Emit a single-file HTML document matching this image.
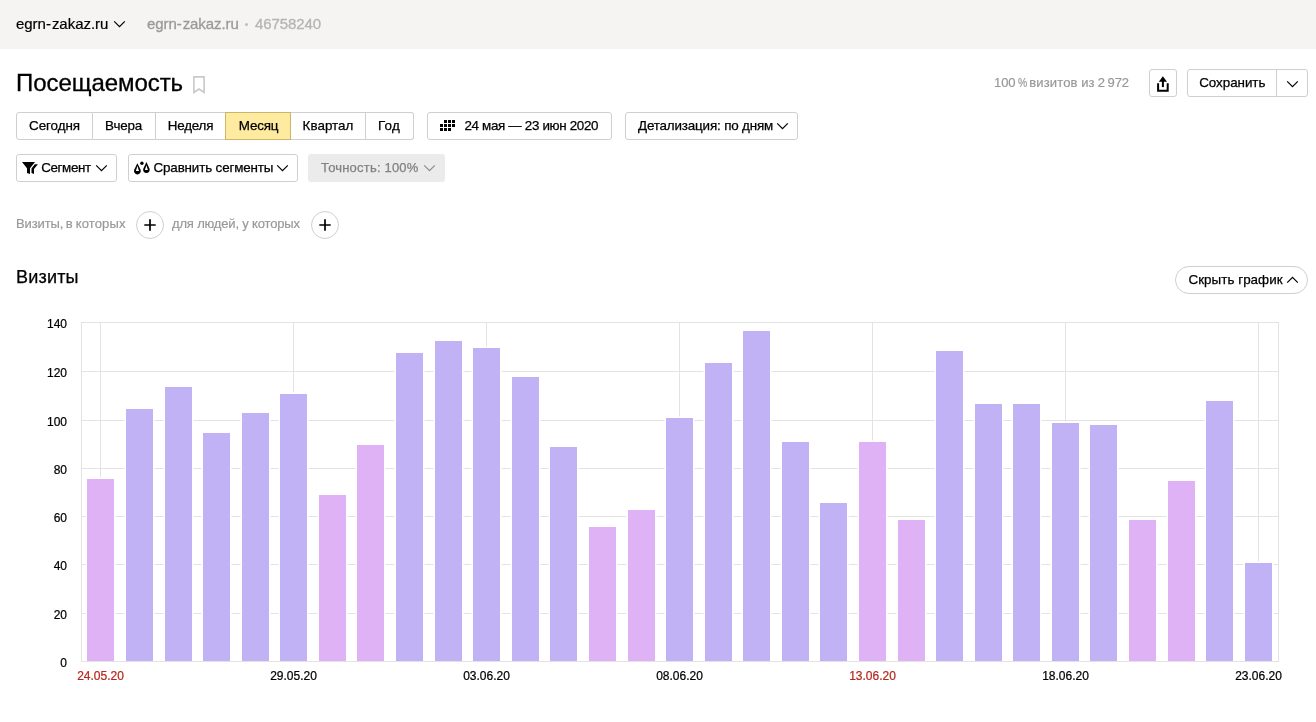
<!DOCTYPE html>
<html lang="ru"><head><meta charset="utf-8"><title>Посещаемость</title>
<style>
*{box-sizing:border-box;margin:0;padding:0}
html,body{width:1316px;height:722px;overflow:hidden;background:#fff}
body{will-change:transform;font-family:"Liberation Sans",sans-serif;color:#000;position:relative;font-size:13px}
.abs{position:absolute;white-space:nowrap}
#hdr{position:absolute;left:0;top:0;width:1316px;height:49px;background:#f5f4f2}
.btn,.seg{-webkit-text-stroke:0.25px #000;letter-spacing:-0.21px}
.btn{position:absolute;height:28px;border:1px solid #cfcfcf;border-radius:3px;background:#fff;font-size:13.4px;line-height:26px;white-space:nowrap}
.seg{position:absolute;top:112px;height:28px;border:1px solid #cfcfcf;border-left:none;background:#fff;font-size:13.4px;line-height:26px;text-align:center;white-space:nowrap}
.chev{position:absolute}
.yl,.xl{-webkit-text-stroke:0.22px currentColor}
.yl{position:absolute;left:20px;width:47px;text-align:right;font-size:12px;line-height:14px;color:#000}
.xl{position:absolute;top:669px;width:60px;text-align:center;font-size:12px;line-height:14px;color:#000}
.xl.red{color:#b8271d}
.gray{color:#999;-webkit-text-stroke:0.2px #999}
</style></head><body>
<div id="hdr"></div>
<div class="abs" style="left:16px;top:14px;font-size:15px;line-height:20px;letter-spacing:-0.03px;-webkit-text-stroke:0.2px #000">egrn-<span style="margin-left:1px">zakaz.ru</span></div>
<svg class="chev c1" width="13" height="8" viewBox="0 0 13 8"><path d="M1.2 1.3 L6.5 6.6 L11.8 1.3" fill="none" stroke="currentColor" stroke-width="1.2"/></svg>
<div class="abs gray" style="left:147px;top:14px;font-size:15px;line-height:20px;letter-spacing:-0.08px;-webkit-text-stroke:0.3px #999">egrn-<span style="margin-left:1px">zakaz.ru</span></div>
<div class="abs" style="left:245.4px;top:23px;width:3px;height:3px;border-radius:2px;background:#bdbdbd"></div>
<div class="abs" style="left:255px;top:14px;font-size:15px;line-height:20px;color:#b4b4b4;-webkit-text-stroke:0.3px #b4b4b4;letter-spacing:-0.1px">46758240</div>

<div class="abs" id="title" style="left:16px;top:68px;font-size:24px;line-height:30px;letter-spacing:-0.06px;-webkit-text-stroke:0.3px #000">Посещаемость</div>
<svg class="abs" style="left:190px;top:73px" width="18" height="24" viewBox="190 73 18 24"><path d="M193.9 76.9 H204.1 V92.4 L199 89 L193.9 92.4 Z" fill="none" stroke="#c9c9c9" stroke-width="1.6"/></svg>

<div class="abs gray" style="left:994px;top:74px;font-size:13px;line-height:18px;letter-spacing:-0.1px">100</div>
<div class="abs gray" style="left:1018px;top:74px;font-size:13px;line-height:18px;transform:scaleX(0.8);transform-origin:0 0">%</div>
<div class="abs gray" style="left:1029.2px;top:74px;font-size:13px;line-height:18px;letter-spacing:0.15px">визитов</div>
<div class="abs gray" style="left:1081.3px;top:74px;font-size:13px;line-height:18px">из</div>
<div class="abs gray" style="left:1097.7px;top:74px;font-size:13px;line-height:18px">2</div>
<div class="abs gray" style="left:1107.5px;top:74px;font-size:13px;line-height:18px;letter-spacing:-0.1px">972</div>
<div class="btn" style="left:1149px;top:69px;width:28px"></div>
<svg class="abs" style="left:1149px;top:69px" width="28" height="28" viewBox="1149 69 28 28"><path d="M1162.9 76.2 L1167 81.8 H1158.8 Z" fill="#000"/><rect x="1161.9" y="80.5" width="2" height="6.6" fill="#000"/><path d="M1158.1 83.3 V90.7 H1167.7 V83.3" fill="none" stroke="#000" stroke-width="2"/></svg>
<div class="btn" style="left:1187px;top:69px;width:121px;padding-left:11.2px;letter-spacing:-0.04px">Сохранить</div>
<div class="abs" style="left:1276px;top:70px;width:1px;height:26px;background:#cfcfcf"></div>
<svg class="chev c2" width="13" height="8" viewBox="0 0 13 8"><path d="M1.2 1.3 L6.5 6.6 L11.8 1.3" fill="none" stroke="currentColor" stroke-width="1.2"/></svg>

<div class="seg" style="left:16px;width:77px;letter-spacing:-0.06px;border-left:1px solid #cfcfcf;border-radius:3px 0 0 3px">Сегодня</div>
<div class="seg" style="left:93px;width:63px;padding-right:1px">Вчера</div>
<div class="seg" style="left:156px;width:70px">Неделя</div>
<div class="seg" style="left:225px;width:66px;background:#ffeba0;border:1px solid #ccb66a;z-index:1;padding-left:1px">Месяц</div>
<div class="seg" style="left:291px;width:75px;letter-spacing:0.04px">Квартал</div>
<div class="seg" style="left:366px;width:48px;letter-spacing:0.19px;padding-right:1px;border-radius:0 3px 3px 0">Год</div>

<div class="btn" style="left:427px;top:112px;width:185px;padding-left:36.4px;letter-spacing:-0.33px">24 мая — 23 июн 2020</div>
<svg class="abs" style="left:440px;top:120px" width="15" height="11" viewBox="0 0 15 11" shape-rendering="crispEdges"><g fill="#000"><rect x="4" y="0" width="3" height="3"/><rect x="8" y="0" width="3" height="3"/><rect x="12" y="0" width="3" height="3"/><rect x="0" y="4" width="3" height="3"/><rect x="4" y="4" width="3" height="3"/><rect x="8" y="4" width="3" height="3"/><rect x="12" y="4" width="3" height="3"/><rect x="0" y="8" width="3" height="3"/><rect x="4" y="8" width="3" height="3"/><rect x="8" y="8" width="3" height="3"/></g></svg>

<div class="btn" style="left:625px;top:112px;width:173px;padding-left:12px;letter-spacing:-0.16px">Детализация: по дням</div>
<svg class="chev c3" width="13" height="8" viewBox="0 0 13 8"><path d="M1.2 1.3 L6.5 6.6 L11.8 1.3" fill="none" stroke="currentColor" stroke-width="1.2"/></svg>

<div class="btn" style="left:16px;top:154px;width:101px;padding-left:24.2px;letter-spacing:-0.36px">Сегмент</div>
<svg class="abs" style="left:20px;top:160px" width="20" height="16" viewBox="20 160 20 16"><path d="M22 162 H35 L30 168.3 V173.9 L27 172.9 V168.3 Z" fill="#000"/><path d="M34.8 164.2 H37.9 L34 168.9 V173.9 L31.5 173.1 V168.4 Z" fill="#000"/></svg>
<svg class="chev c4" width="13" height="8" viewBox="0 0 13 8"><path d="M1.2 1.3 L6.5 6.6 L11.8 1.3" fill="none" stroke="currentColor" stroke-width="1.2"/></svg>

<div class="btn" style="left:128px;top:154px;width:170px;padding-left:24.5px;letter-spacing:-0.14px">Сравнить сегменты</div>
<svg class="abs" style="left:132px;top:160px" width="20" height="16" viewBox="132 160 20 16"><path d="M137.4 163.3 L140.5 169.6 A3.4 3.4 0 1 1 134.3 169.6 Z" fill="#000"/><path d="M137.4 165.8 L139 171.1 H135.9 Z" fill="#fff"/><path d="M146.4 162.1 L149.4 168.4 A3.3 3.3 0 1 1 143.4 168.4 Z" fill="#000"/><path d="M146.4 165.2 L147.9 169.9 H144.9 Z" fill="#fff"/><circle cx="141.9" cy="163.3" r="1.7" fill="#000"/></svg>
<svg class="chev c5" width="13" height="8" viewBox="0 0 13 8"><path d="M1.2 1.3 L6.5 6.6 L11.8 1.3" fill="none" stroke="currentColor" stroke-width="1.2"/></svg>

<div class="abs" style="left:308px;top:154px;width:137px;height:28px;border-radius:3px;background:#ebebeb;font-size:13px;line-height:28px;padding-left:13px;color:#828282;-webkit-text-stroke:0.25px #828282;letter-spacing:0.2px">Точность: 100%</div>
<svg class="chev c6" width="13" height="8" viewBox="0 0 13 8"><path d="M1.2 1.3 L6.5 6.6 L11.8 1.3" fill="none" stroke="currentColor" stroke-width="1.2"/></svg>

<div class="abs gray" style="left:16px;top:215px;font-size:13px;line-height:18px;letter-spacing:-0.1px">Визиты,</div><div class="abs gray" style="left:65.8px;top:215px;font-size:13px;line-height:18px">в</div><div class="abs gray" style="left:75.8px;top:215px;font-size:13px;line-height:18px;letter-spacing:0.12px">которых</div>
<div class="abs circ" style="left:136px;top:211px"><svg style="position:absolute;left:-1px;top:-1px" width="28" height="28" viewBox="0 0 28 28"><path d="M8.3 14 H19.7 M14 8.3 V19.7" stroke="#000" stroke-width="1.7" fill="none"/></svg></div>
<div class="abs gray" style="left:172px;top:215px;font-size:13px;line-height:18px;letter-spacing:-0.17px">для людей, у которых</div>
<div class="abs circ" style="left:311px;top:211px"><svg style="position:absolute;left:-1px;top:-1px" width="28" height="28" viewBox="0 0 28 28"><path d="M8.3 14 H19.7 M14 8.3 V19.7" stroke="#000" stroke-width="1.7" fill="none"/></svg></div>

<div class="abs" style="left:16px;top:266px;font-size:18px;line-height:22px;letter-spacing:0.2px;-webkit-text-stroke:0.25px #000">Визиты</div>

<div class="btn" style="left:1175px;top:266px;width:133px;border-radius:14px;padding-left:12.5px;letter-spacing:0.04px">Скрыть график</div>
<svg class="chev c7" width="13" height="8" viewBox="0 0 13 8"><path d="M1.2 6.7 L6.5 1.4 L11.8 6.7" fill="none" stroke="currentColor" stroke-width="1.2"/></svg>

<svg id="chart" width="1316" height="722" viewBox="0 0 1316 722" style="position:absolute;left:0;top:0" shape-rendering="crispEdges"><rect x="81" y="322" width="1198" height="1" fill="#e3e3e3"/><rect x="81" y="371" width="1198" height="1" fill="#e3e3e3"/><rect x="81" y="420" width="1198" height="1" fill="#e3e3e3"/><rect x="81" y="468" width="1198" height="1" fill="#e3e3e3"/><rect x="81" y="516" width="1198" height="1" fill="#e3e3e3"/><rect x="81" y="564" width="1198" height="1" fill="#e3e3e3"/><rect x="81" y="613" width="1198" height="1" fill="#e3e3e3"/><rect x="81" y="661" width="1198" height="1" fill="#e3e3e3"/><rect x="100" y="322" width="1" height="339" fill="#e3e3e3"/><rect x="293" y="322" width="1" height="339" fill="#e3e3e3"/><rect x="486" y="322" width="1" height="339" fill="#e3e3e3"/><rect x="679" y="322" width="1" height="339" fill="#e3e3e3"/><rect x="872" y="322" width="1" height="339" fill="#e3e3e3"/><rect x="1065" y="322" width="1" height="339" fill="#e3e3e3"/><rect x="1258" y="322" width="1" height="339" fill="#e3e3e3"/><rect x="81" y="322" width="1" height="340" fill="#e3e3e3"/><rect x="1278" y="322" width="1" height="340" fill="#e3e3e3"/><g shape-rendering="auto"><rect x="85.50" y="477.5" width="30" height="183.5" fill="#fff"/><rect x="87.00" y="479" width="27" height="182" fill="#dfb2f5"/><rect x="124.50" y="407.5" width="30" height="253.5" fill="#fff"/><rect x="126.00" y="409" width="27" height="252" fill="#c0b2f5"/><rect x="163.50" y="385.5" width="30" height="275.5" fill="#fff"/><rect x="165.00" y="387" width="27" height="274" fill="#c0b2f5"/><rect x="201.50" y="431.5" width="30" height="229.5" fill="#fff"/><rect x="203.00" y="433" width="27" height="228" fill="#c0b2f5"/><rect x="240.50" y="411.5" width="30" height="249.5" fill="#fff"/><rect x="242.00" y="413" width="27" height="248" fill="#c0b2f5"/><rect x="278.50" y="392.5" width="30" height="268.5" fill="#fff"/><rect x="280.00" y="394" width="27" height="267" fill="#c0b2f5"/><rect x="317.50" y="493.5" width="30" height="167.5" fill="#fff"/><rect x="319.00" y="495" width="27" height="166" fill="#dfb2f5"/><rect x="355.50" y="443.5" width="30" height="217.5" fill="#fff"/><rect x="357.00" y="445" width="27" height="216" fill="#dfb2f5"/><rect x="394.50" y="351.5" width="30" height="309.5" fill="#fff"/><rect x="396.00" y="353" width="27" height="308" fill="#c0b2f5"/><rect x="433.50" y="339.5" width="30" height="321.5" fill="#fff"/><rect x="435.00" y="341" width="27" height="320" fill="#c0b2f5"/><rect x="471.50" y="346.5" width="30" height="314.5" fill="#fff"/><rect x="473.00" y="348" width="27" height="313" fill="#c0b2f5"/><rect x="510.50" y="375.5" width="30" height="285.5" fill="#fff"/><rect x="512.00" y="377" width="27" height="284" fill="#c0b2f5"/><rect x="548.50" y="445.5" width="30" height="215.5" fill="#fff"/><rect x="550.00" y="447" width="27" height="214" fill="#c0b2f5"/><rect x="587.50" y="525.5" width="30" height="135.5" fill="#fff"/><rect x="589.00" y="527" width="27" height="134" fill="#dfb2f5"/><rect x="626.50" y="508.5" width="30" height="152.5" fill="#fff"/><rect x="628.00" y="510" width="27" height="151" fill="#dfb2f5"/><rect x="664.50" y="416.5" width="30" height="244.5" fill="#fff"/><rect x="666.00" y="418" width="27" height="243" fill="#c0b2f5"/><rect x="703.50" y="361.5" width="30" height="299.5" fill="#fff"/><rect x="705.00" y="363" width="27" height="298" fill="#c0b2f5"/><rect x="741.50" y="329.5" width="30" height="331.5" fill="#fff"/><rect x="743.00" y="331" width="27" height="330" fill="#c0b2f5"/><rect x="780.50" y="440.5" width="30" height="220.5" fill="#fff"/><rect x="782.00" y="442" width="27" height="219" fill="#c0b2f5"/><rect x="818.50" y="501.5" width="30" height="159.5" fill="#fff"/><rect x="820.00" y="503" width="27" height="158" fill="#c0b2f5"/><rect x="857.50" y="440.5" width="30" height="220.5" fill="#fff"/><rect x="859.00" y="442" width="27" height="219" fill="#dfb2f5"/><rect x="896.50" y="518.5" width="30" height="142.5" fill="#fff"/><rect x="898.00" y="520" width="27" height="141" fill="#dfb2f5"/><rect x="934.50" y="349.5" width="30" height="311.5" fill="#fff"/><rect x="936.00" y="351" width="27" height="310" fill="#c0b2f5"/><rect x="973.50" y="402.5" width="30" height="258.5" fill="#fff"/><rect x="975.00" y="404" width="27" height="257" fill="#c0b2f5"/><rect x="1011.50" y="402.5" width="30" height="258.5" fill="#fff"/><rect x="1013.00" y="404" width="27" height="257" fill="#c0b2f5"/><rect x="1050.50" y="421.5" width="30" height="239.5" fill="#fff"/><rect x="1052.00" y="423" width="27" height="238" fill="#c0b2f5"/><rect x="1088.50" y="423.5" width="30" height="237.5" fill="#fff"/><rect x="1090.00" y="425" width="27" height="236" fill="#c0b2f5"/><rect x="1127.50" y="518.5" width="30" height="142.5" fill="#fff"/><rect x="1129.00" y="520" width="27" height="141" fill="#dfb2f5"/><rect x="1166.50" y="479.5" width="30" height="181.5" fill="#fff"/><rect x="1168.00" y="481" width="27" height="180" fill="#dfb2f5"/><rect x="1204.50" y="399.5" width="30" height="261.5" fill="#fff"/><rect x="1206.00" y="401" width="27" height="260" fill="#c0b2f5"/><rect x="1243.50" y="561.5" width="30" height="99.5" fill="#fff"/><rect x="1245.00" y="563" width="27" height="98" fill="#c0b2f5"/></g></svg>
<div class="yl" style="top:317px">140</div><div class="yl" style="top:366px">120</div><div class="yl" style="top:415px">100</div><div class="yl" style="top:463px">80</div><div class="yl" style="top:511px">60</div><div class="yl" style="top:559px">40</div><div class="yl" style="top:608px">20</div><div class="yl" style="top:656px">0</div><div class="xl red" style="left:70.5px">24.05.20</div><div class="xl" style="left:263.5px">29.05.20</div><div class="xl" style="left:456.5px">03.06.20</div><div class="xl" style="left:649.5px">08.06.20</div><div class="xl red" style="left:842.5px">13.06.20</div><div class="xl" style="left:1035.5px">18.06.20</div><div class="xl" style="left:1228.5px">23.06.20</div>
<style>
.c1{left:113.3px;top:20px}
.c2{left:1286.1px;top:80px}
.c3{left:776.2px;top:122px}
.c4{left:95px;top:164px}
.c5{left:276.2px;top:164px}
.c6{left:423.2px;top:164px;color:#8c8c8c}
.c7{left:1286px;top:276.2px}
.circ{width:28px;height:28px;border:1px solid #d0d0d0;border-radius:14px;background:#fff}
</style>
</body></html>
